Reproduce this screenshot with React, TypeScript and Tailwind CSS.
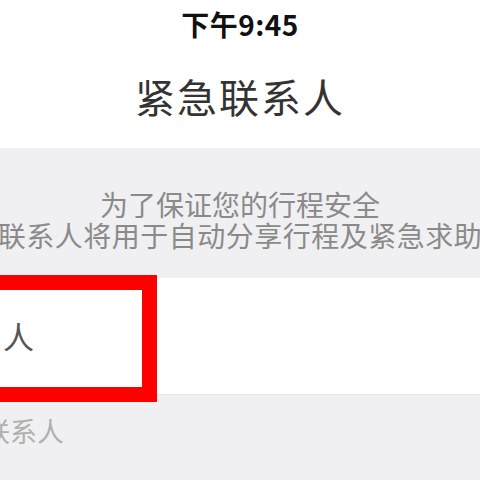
import React from 'react';

const font = { fontFamily: '"Noto Sans CJK SC", "Noto Sans", sans-serif' };

const App: React.FC = () => {
  return (
    <div className="w-[480px] h-[480px] overflow-hidden bg-[#f0f0f2] flex flex-col" style={font}>
      {/* Status bar + title */}
      <div className="bg-white h-[148px] flex flex-col items-center">
        <div className="mt-[5px] text-[28px] leading-[38px] font-bold text-[#111] tracking-[0.5px]">下午9:45</div>
        <div className="mt-[28px] text-[40px] leading-[50px] text-[#333] tracking-[2px]">紧急联系人</div>
      </div>

      {/* Hint */}
      <div className="h-[130px] flex flex-col items-center pt-[41px] text-[#8a8a8a] text-[28px] leading-[31px] whitespace-nowrap">
        <div>为了保证您的行程安全</div>
        <div className="tracking-[0.5px]">联系人将用于自动分享行程及紧急求助</div>
      </div>

      {/* Row */}
      <div className="relative bg-white h-[117px] border-b border-[#e6e6e6] flex items-center">
        <span className="ml-[3px] text-[31px] text-[#555]">人</span>
        <div className="absolute -left-[25px] -top-[3px] w-[182px] h-[127px] border-[15px] border-[#ff0000]" />
      </div>

      {/* Footer */}
      <div className="pt-[18px] text-[27px] leading-[36px] text-[#b0b0b0] whitespace-nowrap">
        <span className="-ml-[17px] inline-block">联系人</span>
      </div>
    </div>
  );
};

export default App;
